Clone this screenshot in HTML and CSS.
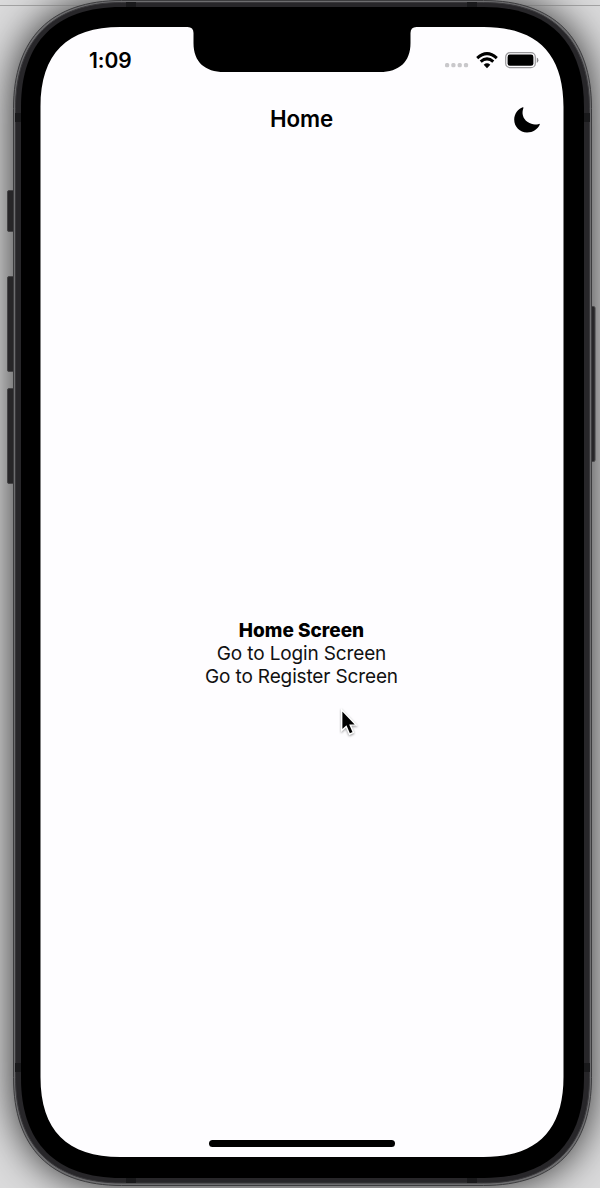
FILE: index.html
```html
<!DOCTYPE html>
<html lang="en">
<head>
<meta charset="utf-8">
<title>Home</title>
<link rel="stylesheet" href="styles.css">
</head>
<body>
<div class="stage">
  <svg class="device" viewBox="0 0 600 1188" aria-hidden="true">
    <defs>
      <filter id="soft" x="-20%" y="-20%" width="140%" height="140%"><feGaussianBlur stdDeviation="20"/></filter>
      <path id="shell" d="M121.500 0.500H483.500C554 .5 591.500 38 591.500 108.500V1077.500C591.500 1148 554 1185.500 483.500 1185.500H121.500C51 1185.500 13.500 1148 13.500 1077.500V108.500C13.500 38 51 .5 121.500 .5Z"/>
    </defs>
    <rect width="600" height="1188" fill="#dadadb"/>
    <use href="#shell" fill="#000" opacity=".82" filter="url(#soft)"/>
    <path d="M0 5.500H600" stroke="#777" stroke-opacity=".55"/>
    <g fill="#272628" stroke="#454446">
      <rect x="7.500" y="190.500" width="9" height="41" rx="1.500"/>
      <rect x="7.500" y="276.500" width="9" height="95" rx="1.500"/>
      <rect x="7.500" y="388.500" width="9" height="95" rx="1.500"/>
      <rect x="587.500" y="306.500" width="7.500" height="155" rx="1.500"/>
    </g>
    <use href="#shell" fill="#6d6d6f" stroke="#3c3c3e"/>
    <path fill="#272629" stroke="#39383b" d="M121.500 2.500H483.500C552 2.500 589.500 40 589.500 108.500V1077.500C589.500 1146 552 1183 483.500 1183H121.500C53 1183 15.500 1146 15.500 1077.500V108.500C15.500 40 53 2.500 121.500 2.500Z"/>
    <path fill="#19191b" d="M126 2h10v6h-10zM467 2h10v6h-10zM126 1177h10v6h-10zM467 1177h10v6h-10zM15 113h7v9h-7zM583 113h7v9h-7zM15 1063h7v9h-7zM583 1063h7v9h-7z"/>
    <path d="M121 7H484C549 7 584 42 584 107V1078C584 1143 549 1178 484 1178H121C56 1178 21 1143 21 1078V107C21 42 56 7 121 7Z"/>
    <path fill="#fefdff" d="M120.500 27H187.500Q193.500 27 193.500 33V43C193.500 62 205 72 224 72H380C399 72 410.500 62 410.500 43V33Q410.500 27 416.500 27H483.500C537 27 563.500 53.500 563.500 107V1077C563.500 1130.500 537 1157 483.500 1157H120.500C67 1157 40.500 1130.500 40.500 1077V107C40.500 53.500 67 27 120.500 27Z"/>
  </svg>
  <div class="screen">
    <header class="status">
      <span class="time">1:09</span>
      <span class="indicators">
        <svg class="cellular" viewBox="0 0 24 5"><g fill="#c9c8cb"><rect x="0" width="4.200" height="4.200" rx="1.500"/><rect x="6.300" width="4.200" height="4.200" rx="1.500"/><rect x="12.600" width="4.200" height="4.200" rx="1.500"/><rect x="18.900" width="4.200" height="4.200" rx="1.500"/></g></svg>
        <svg class="wifi" viewBox="0 0 22 17"><g fill="none" stroke="#000" stroke-width="3"><path d="M1.200 6.100Q11-2.800 20.800 6.100"/><path d="M4.700 9.700Q11 4 17.300 9.700"/></g><path d="M7.700 12.700Q11 9.900 14.300 12.700L11 16.200Z"/></svg>
        <svg class="battery" viewBox="0 0 34 17"><rect x=".7" y=".7" width="29.600" height="15" rx="4.300" fill="none" stroke="#99989b" stroke-width="1.200"/><rect x="2.600" y="2.600" width="25.800" height="11.200" rx="2.300"/><path d="M31.800 5.500Q33.400 6.300 33.400 8.200T31.800 10.900Z" fill="#88878a"/></svg>
      </span>
    </header>
    <nav class="navbar">
      <h1 class="title">Home</h1>
      <svg class="moon" viewBox="0 0 28 28"><path d="M9.800 1.300C5.100 3 1.200 7.700 1.200 13.600C1.200 21 6.900 26.500 14 26.500C20 26.500 24.700 23.200 26.800 18.500Q26.900 17.700 26 17.900C22.700 18.800 18.500 18.900 14.700 16.100C9.700 12.400 8.500 7.200 10.400 2Q10.700 1.100 9.800 1.300Z"/></svg>
    </nav>
    <main class="content">
      <h2 class="heading">Home Screen</h2>
      <a class="link login">Go to Login Screen</a>
      <a class="link register">Go to Register Screen</a>
    </main>
    <div class="home-indicator"></div>
  </div>
  <svg class="cursor" viewBox="0 0 22 32"><path d="M4 3V26L9 21.500L12.700 30L17 28L13.500 20H20Z" fill="#000" stroke="#fff" stroke-width="1.600"/></svg>
</div>
</body>
</html>
```
FILE: styles.css
```css
* { box-sizing: border-box; }
body { margin: 0; overflow: hidden; background: #aaa; }
.stage { position: relative; width: 600px; height: 1188px; font-family: Inter, "Liberation Sans", sans-serif; color: #000; }
.device { position: absolute; inset: 0; width: 600px; height: 1188px; }
.screen { position: relative; display: flex; flex-direction: column; width: 523px; height: 1157px; margin-left: 40px; padding-top: 27px; }
.status { display: flex; justify-content: space-between; height: 65px; padding: 20px 24px 0 49px; }
.time { font-size: 21px; font-weight: 600; line-height: 27px; letter-spacing: -.1px; }
.indicators { display: flex; height: 27px; align-items: center; }
.indicators svg { display: block; }
.cellular { width: 24px; height: 5px; margin: 10px 7px 0 0; }
.wifi { width: 22px; height: 17px; margin-right: 7px; }
.battery { width: 34px; height: 17px; }
.navbar { display: grid; grid-template-columns: 50px 1fr 50px; align-items: center; height: 54px; }
.title { grid-column: 2; margin: 0; text-align: center; font-size: 22.3px; line-height: 28px; font-weight: 600; letter-spacing: -.15px; }
.moon { width: 28px; height: 28px; margin-top: 1px; }
.content { display: flex; flex: 1; flex-direction: column; align-items: center; padding-top: 473px; }
.heading, .link { margin: 0; font-size: 19px; line-height: 23px; white-space: nowrap; }
.heading { font-weight: 800; }
.link { font-weight: 400; letter-spacing: -.14px; color: #111; }
.home-indicator { width: 186px; height: 7px; margin: 0 0 10.500px 169px; border-radius: 4px; background: #000; }
.cursor { position: absolute; left: 338px; top: 707px; width: 20px; height: 29px; filter: drop-shadow(0 1px 1px #0006); }
```
